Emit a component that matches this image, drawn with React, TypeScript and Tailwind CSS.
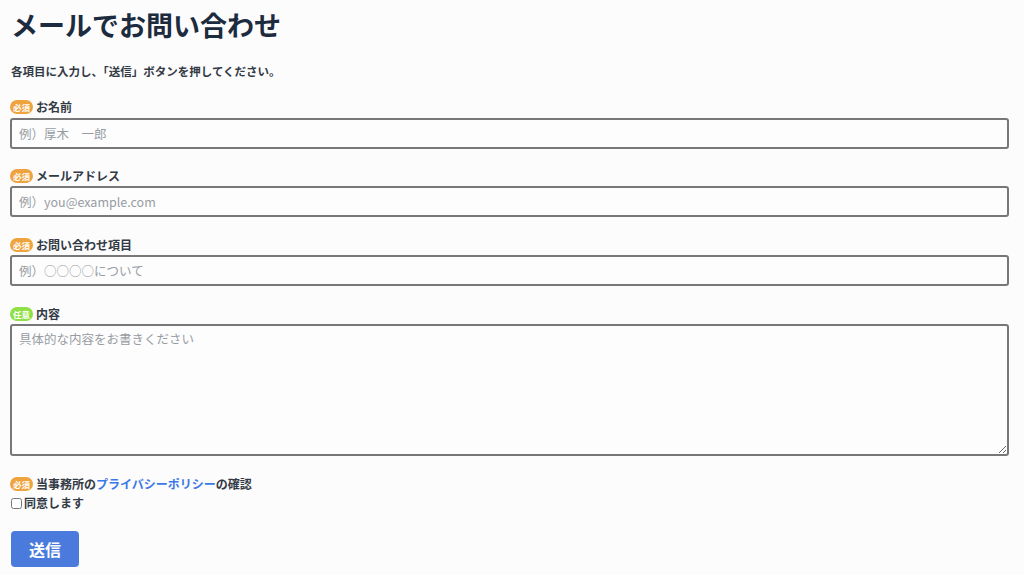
import { useState } from 'react'

const font = { fontFamily: '"Noto Sans CJK JP", "Noto Sans", sans-serif' }

function Badge({ required }: { required: boolean }) {
  return (
    <span
      className={
        'inline-flex h-[14px] w-[23px] items-center justify-center rounded-full text-[8.5px] font-bold leading-none text-white ' +
        (required ? 'bg-[#eea33f]' : 'bg-[#8fe045]')
      }
    >
      {required ? '必須' : '任意'}
    </span>
  )
}

function Label({ required, children }: { required: boolean; children: React.ReactNode }) {
  return (
    <div className="flex h-[16px] items-center gap-[3px] text-[12px] font-bold text-[#333a44]">
      <Badge required={required} />
      <span>{children}</span>
    </div>
  )
}

const inputCls =
  'block w-full rounded-[3px] border-2 border-[#777] bg-[#fdfdfd] px-[7px] text-[12.5px] text-[#333] outline-none placeholder:text-[#979ca3]'

function App() {
  const [agree, setAgree] = useState(false)

  return (
    <div className="min-h-screen bg-[#fcfcfd] px-[10px] pt-[7px] pb-[8px]" style={font}>
      <h1 className="pl-[1px] text-[27px] font-bold leading-[36px] text-[#1c2b3d]">メールでお問い合わせ</h1>
      <p className="mt-[20px] pl-[1px] text-[11.5px] font-bold leading-[16px] text-[#333a44]">
        各項目に入力し、「送信」ボタンを押してください。
      </p>

      <form className="mt-[20px] w-[999px]" onSubmit={(e) => e.preventDefault()}>
        <Label required>お名前</Label>
        <input className={inputCls + ' mt-[3px] h-[31px]'} placeholder="例）厚木　一郎" />

        <div className="mt-[19px]">
          <Label required>メールアドレス</Label>
        </div>
        <input className={inputCls + ' mt-[2px] h-[31px]'} placeholder="例）you@example.com" />

        <div className="mt-[20px]">
          <Label required>お問い合わせ項目</Label>
        </div>
        <input className={inputCls + ' mt-[2px] h-[31px]'} placeholder="例）○○○○について" />

        <div className="mt-[20px]">
          <Label required={false}>内容</Label>
        </div>
        <textarea
          className={inputCls + ' mt-[2px] h-[132px] py-[4px]'}
          placeholder="具体的な内容をお書きください"
        />

        <div className="mt-[20px]">
          <Label required>
            当事務所の<a href="#" className="text-[#3b78e7]">プライバシーポリシー</a>の確認
          </Label>
        </div>
        <label className="mt-[3px] flex h-[16px] items-center gap-[2px] text-[12px] font-bold text-[#333a44]">
          <input
            type="checkbox"
            checked={agree}
            onChange={(e) => setAgree(e.target.checked)}
            className="ml-[1px] h-[11px] w-[11px]"
          />
          同意します
        </label>

        <button
          type="submit"
          className="mt-[20px] ml-[1px] h-[36px] w-[68px] rounded-[4px] bg-[#4a7bdc] text-[16px] font-bold text-white"
        >
          送信
        </button>
      </form>
    </div>
  )
}

export default App
